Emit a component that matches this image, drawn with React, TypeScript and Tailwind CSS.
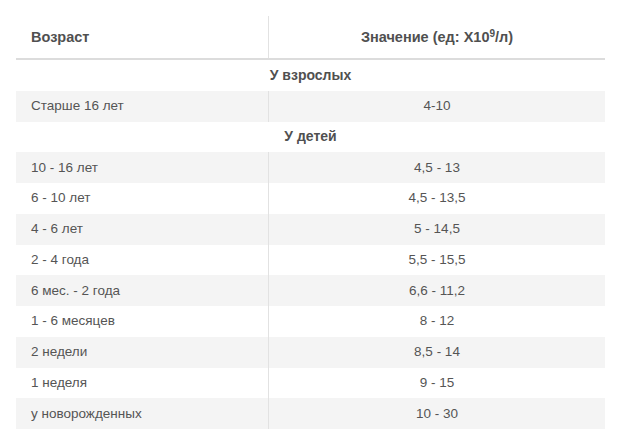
import React from "react";

type Row = { kind: "section"; label: string } | { kind: "data"; age: string; value: string; gray: boolean };

const rows: Row[] = [
  { kind: "section", label: "У взрослых" },
  { kind: "data", age: "Старше 16 лет", value: "4-10", gray: true },
  { kind: "section", label: "У детей" },
  { kind: "data", age: "10 - 16 лет", value: "4,5 - 13", gray: true },
  { kind: "data", age: "6 - 10 лет", value: "4,5 - 13,5", gray: false },
  { kind: "data", age: "4 - 6 лет", value: "5 - 14,5", gray: true },
  { kind: "data", age: "2 - 4 года", value: "5,5 - 15,5", gray: false },
  { kind: "data", age: "6 мес. - 2 года", value: "6,6 - 11,2", gray: true },
  { kind: "data", age: "1 - 6 месяцев", value: "8 - 12", gray: false },
  { kind: "data", age: "2 недели", value: "8,5 - 14", gray: true },
  { kind: "data", age: "1 неделя", value: "9 - 15", gray: false },
  { kind: "data", age: "у новорожденных", value: "10 - 30", gray: true },
];

export default function App() {
  return (
    <div
      className="w-[623px] h-[439px] bg-white pt-4 pl-4 text-[13.5px] text-[#555]"
      style={{ fontFamily: '"Liberation Sans", Arial, sans-serif' }}
    >
      <div className="w-[589px]">
        <div className="flex h-[44px] border-b-2 border-[#dcdcdc] font-bold text-[14.5px] text-[#505050]">
          <div className="w-[253px] flex items-center pl-[15px] border-r border-[#e2e2e2] pt-[2px]">Возраст</div>
          <div className="flex-1 flex items-center justify-center pt-[2px]">
            <span>
              Значение (ед: X10<sup className="text-[10px] -top-[5px]">9</sup>/л)
            </span>
          </div>
        </div>
        {rows.map((r, i) =>
          r.kind === "section" ? (
            <div key={i} className="flex h-[30.75px] items-center justify-center font-bold text-[14px] text-[#505050]">
              {r.label}
            </div>
          ) : (
            <div key={i} className={`flex h-[30.75px] ${r.gray ? "bg-[#f4f4f4]" : "bg-white"}`}>
              <div className="w-[253px] flex items-center pl-[15px] border-r border-[#e2e2e2]">{r.age}</div>
              <div className="flex-1 flex items-center justify-center">{r.value}</div>
            </div>
          )
        )}
      </div>
    </div>
  );
}
